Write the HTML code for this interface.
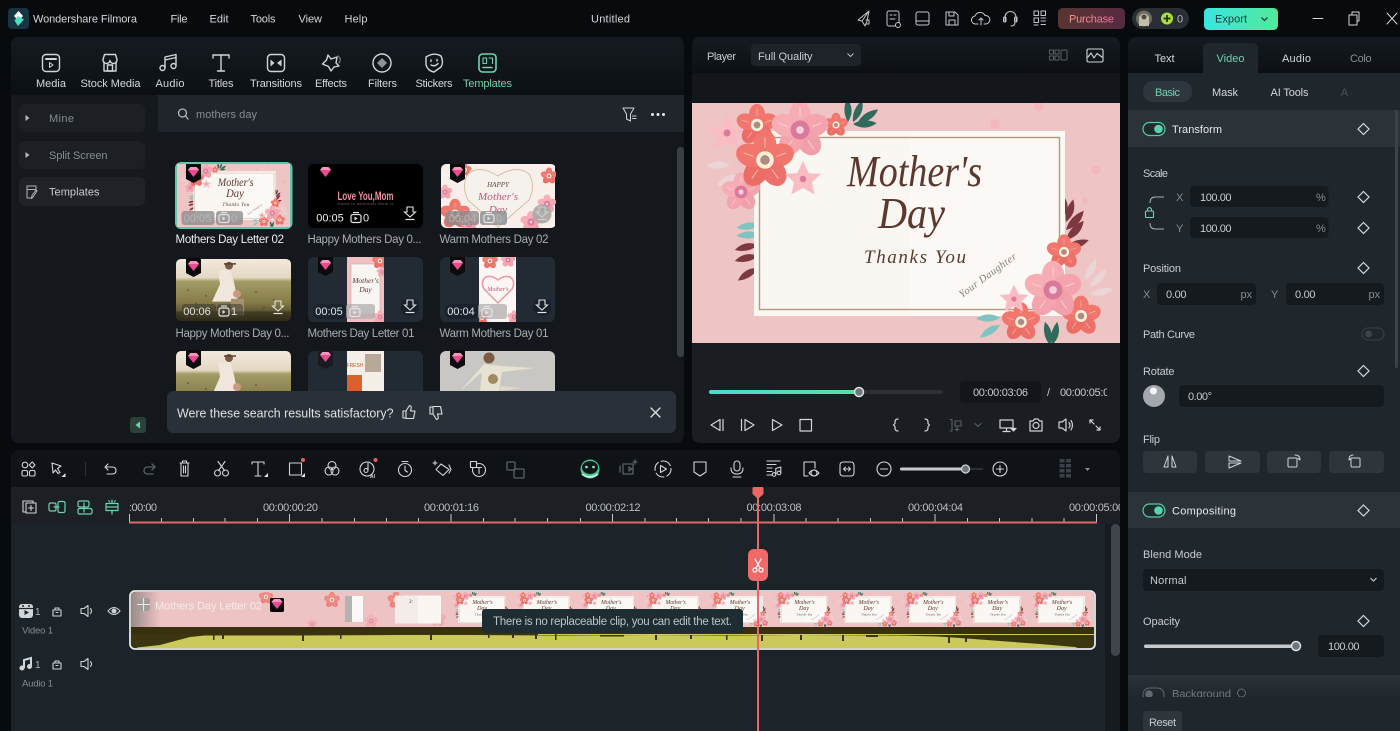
<!DOCTYPE html>
<html lang="en"><head><meta charset="utf-8"><title>Wondershare Filmora</title>
<style>
html,body{margin:0;padding:0;background:#080b0e;width:1400px;height:731px;overflow:hidden}
svg{display:block}
text{font-family:"Liberation Sans",sans-serif;font-size:11px;fill:#d4d7da}
.c{text-anchor:middle}
.d{fill:#868c92}
.l{fill:#c8ccd0}
.i{fill:none;stroke:#d2d5d8;stroke-width:1.3;stroke-linecap:round;stroke-linejoin:round}
.t{fill:none;stroke:#6fd3b0;stroke-width:1.4;stroke-linecap:round;stroke-linejoin:round}
.m{fill:none;stroke:#5b6066;stroke-width:1.3;stroke-linecap:round;stroke-linejoin:round}
.s{font-family:"Liberation Serif",serif;font-style:italic;fill:#5c382e}
</style></head><body>
<svg width="1400" height="731" viewBox="0 0 1400 731" xmlns="http://www.w3.org/2000/svg">
<defs>
<linearGradient id="gb" x1="0" y1="0" x2="0" y2="1"><stop offset="0" stop-color="#161b21"/><stop offset="1" stop-color="#0c1014"/></linearGradient>
<linearGradient id="gp" x1="0" y1="0" x2="1" y2="0"><stop offset="0" stop-color="#5a3531"/><stop offset="1" stop-color="#562a42"/></linearGradient>
<linearGradient id="gptx" x1="0" y1="0" x2="1" y2="0"><stop offset="0" stop-color="#f49a8a"/><stop offset="1" stop-color="#ee6aa0"/></linearGradient>
<linearGradient id="ge" x1="0" y1="0" x2="1" y2="0"><stop offset="0" stop-color="#3ae6e0"/><stop offset="1" stop-color="#52e89a"/></linearGradient>
<linearGradient id="gs" x1="0" y1="0" x2="1" y2="0"><stop offset="0" stop-color="#4fd6d4"/><stop offset="1" stop-color="#58e0a0"/></linearGradient>
<linearGradient id="gr" x1="0" y1="0" x2="0" y2="1"><stop offset="0" stop-color="#2b3238"/><stop offset="1" stop-color="#1f262c"/></linearGradient>
<linearGradient id="gf" x1="0" y1="0" x2="0" y2="1"><stop offset="0" stop-color="#f1e9dd"/><stop offset=".3" stop-color="#e4d8c4"/><stop offset=".36" stop-color="#a39c66"/><stop offset=".7" stop-color="#857b48"/><stop offset="1" stop-color="#332e18"/></linearGradient>
<linearGradient id="gl" x1="0" y1="0" x2="1" y2="0"><stop offset="0" stop-color="#9a8a8a"/><stop offset=".03" stop-color="#edc3c3"/></linearGradient>

<g id="fc">
 <ellipse cx="0" cy="-17" rx="13" ry="17" fill="#f0766e"/><ellipse cx="0" cy="-17" rx="13" ry="17" fill="#f0766e" transform="rotate(72)"/><ellipse cx="0" cy="-17" rx="13" ry="17" fill="#ee706a" transform="rotate(144)"/><ellipse cx="0" cy="-17" rx="13" ry="17" fill="#ec6c66" transform="rotate(216)"/><ellipse cx="0" cy="-17" rx="13" ry="17" fill="#f0766e" transform="rotate(288)"/>
 <g stroke="#fbc4b8" stroke-width="1" fill="none"><path d="M0-14V-26M13-4L24-8M8 11L15 21M-8 11L-15 21M-13-4L-24-8"/></g>
 <circle r="10" fill="#fdf0d8"/><circle r="5.500" fill="#7a4a48" opacity=".6"/>
</g>
<g id="fp">
 <ellipse cx="0" cy="-17" rx="13" ry="17" fill="#f6adb3"/><ellipse cx="0" cy="-17" rx="13" ry="17" fill="#f3a4ad" transform="rotate(72)"/><ellipse cx="0" cy="-17" rx="13" ry="17" fill="#f0a0aa" transform="rotate(144)"/><ellipse cx="0" cy="-17" rx="13" ry="17" fill="#f3a4ad" transform="rotate(216)"/><ellipse cx="0" cy="-17" rx="13" ry="17" fill="#f6adb3" transform="rotate(288)"/>
 <g stroke="#fbd4d8" stroke-width="1" fill="none"><path d="M0-15V-27M14-4L25-8M9 12L16 22M-9 12L-16 22M-14-4L-25-8"/></g>
 <circle r="11" fill="#d97a9b"/><circle r="4.500" fill="#f6cfdc"/>
</g>
<g id="fs">
 <path d="M0-28L9-9 28-8 14 5 18 24 0 14-18 24-14 5-28-8-9-9Z" fill="#f8bcc2"/><circle r="5" fill="#dc7a98"/>
</g>
<g id="leaf"><path d="M0 0Q8-10 22-9Q14 3 0 0Z"/></g>

<g id="mc">
 <rect x="692" y="103" width="428" height="240" fill="#efc4c5"/>
 <g fill="#f6b4b8" opacity=".7"><circle cx="1039" cy="106" r="5"/><circle cx="995" cy="124" r="5"/><circle cx="1096" cy="170" r="5"/><circle cx="1085" cy="201" r="3"/></g>
 <g fill="#2f6a5c"><use href="#leaf" transform="translate(848,122) rotate(-70)"/><use href="#leaf" transform="translate(853,122) rotate(-45)"/><use href="#leaf" transform="translate(858,122) rotate(-10)"/><use href="#leaf" transform="translate(853,124) rotate(20)"/></g>
 <g fill="#7fc4c0"><use href="#leaf" transform="translate(760,225) rotate(195)"/><use href="#leaf" transform="translate(760,235) rotate(200)"/></g>
 <g fill="#7c3a40"><use href="#leaf" transform="translate(758,245) rotate(190)"/><use href="#leaf" transform="translate(758,256) rotate(190)"/><use href="#leaf" transform="translate(758,268) rotate(170)"/></g>
 <g fill="#7c3a40"><use href="#leaf" transform="translate(1066,240) rotate(-25) scale(1.1)"/><use href="#leaf" transform="translate(1066,230) rotate(-25) scale(1.1)"/><use href="#leaf" transform="translate(1066,247) rotate(5)"/><use href="#leaf" transform="translate(1066,222) rotate(-50)"/><use href="#leaf" transform="translate(1066,215) rotate(-80) scale(.9)"/></g>
 <g fill="#ead6d6"><use href="#leaf" transform="translate(730,165) rotate(200)"/><use href="#leaf" transform="translate(738,175) rotate(175)"/><use href="#leaf" transform="translate(1085,280) rotate(-40)"/><use href="#leaf" transform="translate(1090,287) rotate(-25)"/><use href="#leaf" transform="translate(1090,294) rotate(10)"/></g>
 <rect x="754" y="131" width="311" height="185" fill="#faf6f2"/>
 <rect x="910" y="131" width="155" height="185" fill="#fbf8f5"/>
 <rect x="759.500" y="137.500" width="300" height="172" fill="none" stroke="#b59a7c" stroke-width="1.400"/>
 <text class="s" x="847" y="186" style="font-size:44px" textLength="135" lengthAdjust="spacingAndGlyphs">Mother's</text>
 <text class="s" x="878" y="228" style="font-size:44px" textLength="67" lengthAdjust="spacingAndGlyphs">Day</text>
 <text class="s" x="864" y="263" style="font-size:19px" textLength="102" >Thanks You</text>
 <text class="s" transform="translate(962,298) rotate(-36)" style="font-size:10.500px;fill:#8a7a72" textLength="68">Your Daughter</text>
 <use href="#fs" transform="translate(727,133) scale(.7)"/>
 <use href="#fc" transform="translate(757,125) scale(.62)"/>
 <use href="#fc" transform="translate(836,125) scale(.36)"/>
 <use href="#fp" transform="translate(800,130) scale(.86)"/>
 <use href="#fp" transform="translate(741,192) scale(.58)"/>
 <use href="#fc" transform="translate(765,160) scale(.88)"/>
 <use href="#fs" transform="translate(803,179) scale(.64)"/>
 <g fill="#2f6a5c"><use href="#leaf" transform="translate(1050,345) rotate(-80)"/><use href="#leaf" transform="translate(1052,345) rotate(-55)"/></g>
 <g fill="#7fc4c0"><use href="#leaf" transform="translate(1000,318) rotate(200)"/><use href="#leaf" transform="translate(1000,325) rotate(170)"/></g>
 <use href="#fc" transform="translate(1021,322) scale(.58)"/>
 <use href="#fc" transform="translate(1081,316) scale(.6)"/>
 <use href="#fc" transform="translate(1064,252) scale(.52)"/>
 <use href="#fp" transform="translate(1053,290) scale(.86)"/>
 <use href="#fs" transform="translate(1014,299) scale(.52)"/>
</g>

<g id="gem"><path d="M-5.500-3L-3-6H3L5.500-3 0 4Z" fill="#ee4a94"/><path d="M-5.500-3L-3-6H3L5.500-3Z" fill="#fb95c0"/></g>
<g id="badge"><path d="M0 0H15V15L7.500 19 0 15Z" fill="#0b0b0d"/><use href="#gem" x="7.500" y="9"/></g>
<g id="badge0"><use href="#gem" x="7.500" y="9"/></g>
<path id="kf" d="M0-5.500L5.500 0 0 5.500-5.500 0Z" fill="none" stroke="#d6d9dc" stroke-width="1.200"/>
<g id="dl"><path d="M-3-6H3V-1H5.500L0 4-5.500-1H-3Z" fill="none" stroke="#e2e4e6" stroke-width="1.100"/><path d="M-4.500 6.500H4.500" stroke="#e2e4e6" stroke-width="1.200"/></g>
<g id="clipi"><rect x="-5" y="-3.500" width="10" height="8" rx="2" fill="none" stroke="#e2e4e6" stroke-width="1.200"/><path d="M-3-5.500H3" stroke="#e2e4e6" stroke-width="1.100"/><path d="M-1.500-1.500L1.500.5-1.500 2.500Z" fill="#e2e4e6"/></g>

<g id="photo">
 <rect width="115" height="64" fill="url(#gf)"/>
 <g fill="#7a2e20" opacity=".6"><circle cx="12" cy="32" r="1"/><circle cx="30" cy="38" r="1"/><circle cx="80" cy="34" r="1"/><circle cx="98" cy="42" r="1"/><circle cx="20" cy="46" r="1"/><circle cx="88" cy="50" r="1"/></g>
 <path d="M42 12L54 10 58 24 62 44H36L44 26Z" fill="#f0e6dc"/>
 <circle cx="53" cy="7" r="4" fill="#7a5a46"/><path d="M48 5H60" stroke="#5a4030" stroke-width="1.600"/>
 <circle cx="61" cy="36" r="4" fill="#c89a84"/><path d="M55 41H68V58H55Z" fill="#a88f70"/>
 <rect y="54" width="115" height="10" fill="#2a2614" opacity=".5"/>
</g>
<g id="film">
 <rect width="64.400" height="35" fill="#eec4c5"/>
 <use href="#mc" transform="scale(.1505,.1458) translate(-692,-103)"/>
</g>
<clipPath id="cpanel"><rect x="11" y="37" width="673" height="406" rx="8"/></clipPath>
<clipPath id="cgrid"><rect x="158" y="132" width="519" height="259"/></clipPath>
<clipPath id="cclip"><rect x="131" y="592" width="963" height="56" rx="4"/></clipPath>
<clipPath id="ctl"><rect x="11" y="487" width="1109" height="244"/></clipPath>
<clipPath id="ctc"><rect x="1050" y="380" width="57" height="24"/></clipPath>
<clipPath id="ccol"><rect x="1340" y="45" width="32" height="24"/></clipPath>
<clipPath id="cbg"><rect x="1128" y="675" width="272" height="22"/></clipPath>
<clipPath id="r1"><rect x="0" y="0" width="115" height="64" rx="5"/></clipPath>
<clipPath id="pa"><rect x="347" y="257" width="37" height="65"/></clipPath>
<clipPath id="pb"><rect x="479" y="257" width="37" height="65"/></clipPath>
<clipPath id="pc"><rect x="440" y="351" width="115" height="40"/></clipPath>
</defs>

<rect width="1400" height="731" fill="#080b0e"/>

<!-- TITLE BAR -->
<rect x="8" y="8" width="21" height="21" rx="4" fill="#163540"/>
<path d="M18.500 11L23 16 18.500 21 14 16Z" fill="#ffffff"/><path d="M18 16L24 19.500 18 26 14.500 20.500Z" fill="#52dcc0"/>
<text x="33" y="22.500" textLength="104">Wondershare Filmora</text>
<text x="170.500" y="22.500" textLength="17">File</text>
<text x="209.500" y="22.500" textLength="19">Edit</text>
<text x="250.500" y="22.500" textLength="25">Tools</text>
<text x="298.500" y="22.500" textLength="23.500">View</text>
<text x="344.500" y="22.500" textLength="23">Help</text>
<text x="591" y="22.500" textLength="39">Untitled</text>

<g class="i" style="stroke-width:1;stroke:#c2c6c9">
 <path d="M869 11L858 20 862 21 865 26 867 21Z"/><path d="M862 21L869 11"/><path d="M866 20H869V24H866"/>
 <rect x="887" y="11" width="12" height="15" rx="2"/><path d="M890 15H892M894 15H896M890 19H895"/><circle cx="898" cy="25" r="2.500" fill="#080b0e"/>
 <rect x="916" y="12" width="13" height="13" rx="2"/><path d="M916 21H929"/>
 <path d="M946 12H955L958 15V25H946Z"/><path d="M949 12V16H954V12M949 25V20H955V25"/>
 <path d="M978 24H976A4 4 0 0 1 975 16 5.500 5.500 0 0 1 985 15.500 4 4 0 0 1 986 24H984"/><path d="M981 25V18M979 20L981 18 983 20"/>
 <path d="M1005 21V17A5.500 5.500 0 0 1 1016 17V21"/><rect x="1003.500" y="17" width="2.500" height="5" rx="1"/><rect x="1014.500" y="17" width="2.500" height="5" rx="1"/><path d="M1015 22Q1015 26 1011 26"/>
 <rect x="1034" y="11" width="4.500" height="4.500"/><rect x="1041" y="11" width="4.500" height="4.500"/><rect x="1034" y="18" width="4.500" height="4.500"/><path d="M1041 18H1045.500M1041 21H1045.500M1041 24.500H1045.500M1034 25H1038"/>
</g>
<rect x="1058" y="8" width="67" height="21" rx="4.500" fill="url(#gp)"/>
<text x="1091.500" y="22.500" class="c" style="fill:url(#gptx)" textLength="45">Purchase</text>
<rect x="1132" y="8" width="57" height="21" rx="10.500" fill="#292e34"/>
<circle cx="1144" cy="18.500" r="8" fill="#6a6a60"/><path d="M1139 26V17Q1144 10 1149 17V26Z" fill="#c5bda8"/><circle cx="1144" cy="17" r="2.500" fill="#4a4a40"/>
<circle cx="1167" cy="18.500" r="6" fill="#a9df36"/><path d="M1167 15V22M1163.500 18.500H1170.500" stroke="#23320c" stroke-width="1.800"/>
<text x="1180" y="22.500" class="d c" style="fill:#b2b6ba">0</text>
<rect x="1204" y="8" width="74" height="22" rx="4.500" fill="url(#ge)"/>
<text x="1215" y="22.500" textLength="32" style="fill:#0e3a36">Export</text>
<path d="M1261.500 17.500L1264.500 20.500 1267.500 17.500" fill="none" stroke="#0e3a36" stroke-width="1.200"/>
<g class="i" style="stroke-width:1"><path d="M1313 18.500H1323"/><rect x="1349" y="15" width="8" height="10"/><path d="M1352 15V12H1359V21H1357"/><path d="M1387 13L1397 24M1397 13L1387 24"/></g>

<!-- MEDIA PANEL -->
<g clip-path="url(#cpanel)">
 <rect x="11" y="37" width="673" height="406" fill="#14171c"/>
 <rect x="11" y="37" width="673" height="58" fill="url(#gb)"/>
 <rect x="11" y="95" width="147" height="348" fill="#15181d"/>
 <rect x="158" y="95" width="526" height="37" fill="#1f252b"/>
</g>
<g class="i" style="stroke-width:1.400">
 <rect x="42.500" y="54.500" width="17" height="17" rx="3.500"/><path d="M46 59H56" stroke-width="2"/><path d="M49.500 62.500L53 65 49.500 67.500Z" stroke-width="1"/>
 <path d="M103 59.500L104.500 54.500H115.500L117 59.500A3.300 3.300 0 0 1 110 60.500 3.300 3.300 0 0 1 103 59.500Z"/><path d="M104 62V71H116V62"/><rect x="107.500" y="65" width="5" height="6"/>
 <path d="M165 67.500V57L176 54.500V65"/><circle cx="162.500" cy="68" r="2.500"/><circle cx="173.500" cy="66" r="2.500"/><path d="M165 60L176 57.500"/>
 <path d="M213 58V55H229V58M221 55V71M217.500 71H224.500"/>
 <rect x="267.500" y="54.500" width="17" height="17" rx="3.500"/>
 <path d="M270.500 59.500L274.500 63 270.500 66.500Z" style="stroke:none;fill:#d2d5d8"/><path d="M281.500 59.500L277 63 281.500 66.500Z" style="stroke:none;fill:#d2d5d8"/>
 <path d="M328 55L331 59 337 57 336 63 339 66 334 67 331 71 328.500 66.500 322.500 64 326.500 60Z"/><path d="M338 56Q342 59 339 63" stroke="#6a6f75"/>
 <circle cx="382" cy="63" r="9"/><path d="M382 58L387 63 382 68 377 63Z" style="stroke:none;fill:#8e9399"/>
 <path d="M426 57Q434 52 441 56Q444 62 441 67L434 72Q428 71 426 65Z"/><path d="M431 60V61.500M437 59.500V61M431 65Q435 67 438 63.500"/>
</g>
<g class="t" style="stroke-width:1.600"><rect x="479" y="54" width="17" height="18" rx="3.500"/><path d="M483 67.500H492"/><path d="M483 58V63.500H486.500V58ZM489 58H492.500V63.500" style="stroke-width:1.100"/></g>
<text x="51" y="87" class="c" textLength="30">Media</text>
<text x="110.500" y="87" class="c" textLength="60">Stock Media</text>
<text x="170" y="87" class="c" textLength="29">Audio</text>
<text x="221" y="87" class="c" textLength="25">Titles</text>
<text x="276" y="87" class="c" textLength="52">Transitions</text>
<text x="331" y="87" class="c" textLength="32">Effects</text>
<text x="382.500" y="87" class="c" textLength="29">Filters</text>
<text x="434" y="87" class="c" textLength="37">Stickers</text>
<text x="487.500" y="87" class="c" textLength="49" style="fill:#6fd0ae">Templates</text>

<!-- sidebar -->
<rect x="19" y="104" width="126" height="28" rx="6" fill="#1c2025"/>
<rect x="19" y="141" width="126" height="28" rx="6" fill="#1c2025"/>
<rect x="19" y="177" width="126" height="29" rx="6" fill="#1f2328"/>
<path d="M25.500 115L29.500 118 25.500 121Z M25.500 152L29.500 155 25.500 158Z" fill="#b5b9bd"/>
<text x="49" y="122" class="d" textLength="25">Mine</text>
<text x="49" y="159" class="d" textLength="58.500">Split Screen</text>
<text x="49" y="195.500" class="l" textLength="50.500">Templates</text>
<g class="i" style="stroke:#b0b4b8;stroke-width:1"><path d="M36 191V186H27V198H31"/><path d="M27 189.500H36"/><path d="M37 191L33 197 31.500 198.500 32 195.500 36 190Z"/></g>
<rect x="130" y="417" width="16" height="16" rx="3" fill="#2c4238"/><path d="M140 421.500L135.500 425 140 428.500Z" fill="#6fd3b0"/>

<!-- search -->
<g class="i" style="stroke:#b6babe"><circle cx="182.500" cy="113" r="4"/><path d="M185.500 116L188 119"/></g>
<text x="196" y="118" class="d" textLength="61">mothers day</text>
<g class="i" style="stroke:#d0d3d6;stroke-width:1"><path d="M623 108H634L630.500 114V121L626.500 119V114Z"/><path d="M632.500 116H636M632.500 118.500H636"/></g>
<circle cx="652.500" cy="114.500" r="1.500" fill="#e6e8ea"/><circle cx="658" cy="114.500" r="1.500" fill="#e6e8ea"/><circle cx="663.500" cy="114.500" r="1.500" fill="#e6e8ea"/>
<rect x="677" y="147" width="7" height="210" rx="3.500" fill="#3a3f45"/>

<!-- GRID -->
<g clip-path="url(#cgrid)">
 <!-- row 1 -->
 <rect x="175" y="162" width="117.500" height="67" rx="6" fill="#5fc8ac"/>
 <svg x="177" y="164" width="113" height="63" viewBox="692 103 428 240" preserveAspectRatio="none"><use href="#mc"/></svg>
 <rect x="181.500" y="211" width="33" height="14" rx="3" fill="#8a8a8c" opacity=".78"/><rect x="216" y="211" width="27" height="14" rx="3" fill="#8a8a8c" opacity=".78"/>
 <text x="197.500" y="222" class="c" style="fill:#b8b4b4">00:05</text><use href="#clipi" x="224" y="218"/><text x="231" y="222" style="fill:#b8b4b4">0</text>
 <use href="#badge" x="186" y="164"/>

 <rect x="308" y="164" width="115" height="64" rx="6" fill="#000"/>
 <text x="365.500" y="200" class="c" style="font-size:11.500px;font-weight:bold;fill:#ee8ea0" textLength="56" lengthAdjust="spacingAndGlyphs">Love You,Mom</text>
 <text x="365.500" y="205" class="c" style="font-size:4px;fill:#7d5d66" textLength="56">Home is wherever Mom is</text>
 <use href="#badge0" x="318" y="164"/>
 <text x="330" y="221.500" class="c" style="fill:#eceef0">00:05</text><use href="#clipi" x="356" y="218"/><text x="363" y="221.500" style="fill:#eceef0">0</text>
 <use href="#dl" x="410" y="213"/>

 <g transform="translate(441,164)">
  <g clip-path="url(#r1)">
  <rect width="114" height="64" fill="#f8eeea"/>
  <use href="#fc" transform="translate(14,50) scale(.45)"/><use href="#fp" transform="translate(28,60) scale(.3)"/><use href="#fp" transform="translate(4,28) scale(.22)"/>
  <use href="#fc" transform="translate(108,12) scale(.25)"/><use href="#fp" transform="translate(106,40) scale(.28)"/><use href="#fc" transform="translate(24,6) scale(.2)"/><use href="#fp" transform="translate(90,58) scale(.32)"/>
  <path d="M57 63L27 36Q20 22 27 10 38 0 57 12 76 0 88 10 95 22 88 36Z" fill="#f5f1ec" stroke="#d6c19f" stroke-width="1"/>
  <text x="57" y="23" class="c s" style="font-size:7px;fill:#5a4238">HAPPY</text>
  <text x="57" y="36" class="c s" style="font-size:11px;fill:#c8567e" textLength="40">Mother's</text>
  <text x="57" y="49" class="c s" style="font-size:11px;fill:#c8567e">Day</text>
  </g>
 </g>
 <rect x="446" y="211" width="33" height="14" rx="3" fill="#8a8a8c" opacity=".78"/><rect x="480" y="211" width="27" height="14" rx="3" fill="#8a8a8c" opacity=".78"/>
 <text x="462.500" y="222" class="c" style="fill:#b8b4b4">00:04</text><use href="#clipi" x="489" y="218"/><text x="496" y="222" style="fill:#b8b4b4">0</text>
 <circle cx="542" cy="214" r="9.500" fill="#a9a7a5" opacity=".9"/><use href="#dl" x="542" y="213" opacity=".6"/>
 <use href="#badge" x="450" y="164"/>

 <!-- row 2 -->
 <g transform="translate(176,259) scale(1,.97)"><use href="#photo" clip-path="url(#r1)"/></g>
 <rect x="182" y="304" width="34" height="14" rx="3" fill="#3a3a30" opacity=".55"/><rect x="217" y="304" width="26" height="14" rx="3" fill="#3a3a30" opacity=".55"/>
 <text x="197" y="315" class="c" style="fill:#e2e2de">00:06</text><use href="#clipi" x="224" y="311.500"/><text x="231" y="315" style="fill:#e2e2de">1</text>
 <use href="#dl" x="278" y="307"/>
 <use href="#badge" x="186" y="258"/>

 <rect x="308" y="257" width="115" height="65" rx="6" fill="#222b34"/>
 <g clip-path="url(#pa)">
 <rect x="347" y="257" width="37" height="65" fill="#f2bfc4"/><rect x="351" y="264" width="29" height="50" fill="#f9f5f2" stroke="#bba48c" stroke-width=".5"/>
 <text x="365.500" y="283" class="c s" style="font-size:7.500px">Mother's</text><text x="365.500" y="292" class="c s" style="font-size:7.500px">Day</text>
 <use href="#fc" transform="translate(380,261) scale(.24)"/><use href="#fp" transform="translate(382,272) scale(.16)"/><use href="#fp" transform="translate(380,317) scale(.2)"/>
 </g>
 <rect x="313" y="304" width="33" height="15" rx="6" fill="#1a232c"/><rect x="346" y="304" width="29" height="15" rx="3" fill="#b0acac" opacity=".72"/>
 <text x="329" y="315" class="c" style="fill:#e2e4e6">00:05</text><use href="#clipi" x="355" y="312"/><text x="362" y="315" style="fill:#bdbaba">0</text>
 <circle cx="410" cy="307" r="9" fill="#182028"/><use href="#dl" x="410" y="306"/>
 <use href="#badge" x="318" y="257"/>

 <rect x="440" y="257" width="115" height="65" rx="6" fill="#222b34"/>
 <g clip-path="url(#pb)">
 <rect x="479" y="257" width="37" height="65" fill="#fbf5f3"/>
 <path d="M498 303L484 289Q480 281 486 277 492 275 498 280 504 275 510 277 516 281 512 289Z" fill="none" stroke="#ea9aa0" stroke-width="1.500"/>
 <text x="498" y="291" class="c s" style="font-size:6px;fill:#c8567e">Mother's</text>
 <use href="#fc" transform="translate(490,261) scale(.24)"/><use href="#fp" transform="translate(508,260) scale(.22)"/><use href="#fp" transform="translate(514,317) scale(.2)"/><use href="#fc" transform="translate(482,318) scale(.2)"/>
 </g>
 <rect x="445" y="304" width="33" height="15" rx="6" fill="#1a232c"/><rect x="478" y="304" width="29" height="15" rx="3" fill="#b0acac" opacity=".72"/>
 <text x="461" y="315" class="c" style="fill:#e2e4e6">00:04</text><use href="#clipi" x="487" y="312"/><text x="494" y="315" style="fill:#bdbaba">0</text>
 <circle cx="542" cy="307" r="9" fill="#182028"/><use href="#dl" x="542" y="306"/>
 <use href="#badge" x="450" y="257"/>

 <!-- labels -->
 <text x="175.500" y="243" style="font-size:11.500px;fill:#eceef0" textLength="108.500">Mothers Day Letter 02</text>
 <text x="307.500" y="243" class="l" style="font-size:11.500px;fill:#a8adb2" textLength="114">Happy Mothers Day 0...</text>
 <text x="439.500" y="243" class="l" style="font-size:11.500px;fill:#a8adb2" textLength="109">Warm Mothers Day 02</text>
 <text x="175.500" y="337" style="font-size:11.500px;fill:#a8adb2" textLength="114">Happy Mothers Day 0...</text>
 <text x="307.500" y="337" style="font-size:11.500px;fill:#a8adb2" textLength="107">Mothers Day Letter 01</text>
 <text x="439.500" y="337" style="font-size:11.500px;fill:#a8adb2" textLength="109">Warm Mothers Day 01</text>

 <!-- row 3 -->
 <g transform="translate(176,351)"><use href="#photo" clip-path="url(#r1)"/></g>
 <use href="#badge" x="186" y="350"/>
 <rect x="308" y="351" width="115" height="64" rx="6" fill="#222b34"/>
 <rect x="347" y="351" width="37" height="60" fill="#f4f0e8"/><rect x="347" y="375" width="15" height="20" fill="#d8622a"/><rect x="365" y="354" width="16" height="18" fill="#b8a89a"/>
 <text x="355" y="367" class="c" style="font-size:5px;fill:#c85a2a">FRESH</text>
 <path d="M318 350H333V365L325.500 369 318 365Z" fill="#1a1a20"/><use href="#gem" x="325.500" y="358"/>
 <g clip-path="url(#pc)">
 <rect x="440" y="351" width="115" height="64" rx="6" fill="#c9c7c3"/>
 <circle cx="489" cy="358" r="5.500" fill="#7a5a42"/><path d="M484 364L500 366 535 368 502 372 499 391H480L482 372 460 391Z" fill="#e8e2d2"/>
 <circle cx="493" cy="379" r="5" fill="#a08a60"/><path d="M500 386L522 388 500 391Z" fill="#e0d8c4"/>
 </g>
 <use href="#badge" x="450" y="350"/>
</g>

<!-- feedback -->
<rect x="167" y="391" width="509" height="42" rx="6" fill="#2a3037"/>
<text x="177" y="417.500" style="font-size:13.200px;fill:#dee1e3" textLength="216.500" lengthAdjust="spacingAndGlyphs">Were these search results satisfactory?</text>
<g class="i" style="stroke:#dfe2e4;stroke-width:1.100">
 <path d="M406 411V418H403V411ZM406 411L409.500 405.500Q412 406 411 409L410.500 411H415L413.500 418.500H406"/>
 <path d="M433 414V407H430V414ZM433 414L436.500 419.500Q439 419 438 416L437.500 414H442L440.500 406.500H433"/>
 <path d="M651 408L660 417M660 408L651 417" style="stroke-width:1.300"/>
</g>

<!-- PLAYER -->
<rect x="692" y="37" width="428" height="406" rx="8" fill="#1a1d21"/>
<path d="M692 73V45A8 8 0 0 1 700 37H1112A8 8 0 0 1 1120 45V73Z" fill="url(#gb)"/>
<rect x="692" y="73" width="428" height="30" fill="#13171b"/>
<text x="707" y="60" class="l" textLength="29">Player</text>
<rect x="751" y="44" width="110" height="22" rx="4" fill="#1d2329"/>
<text x="758" y="60" class="l" textLength="54.500">Full Quality</text>
<path d="M847.500 53.500L850.500 56.500 853.500 53.500" fill="none" stroke="#b8bcc0" stroke-width="1.100"/>
<g class="m" style="stroke-width:1"><rect x="1049.500" y="50" width="4" height="4"/><rect x="1055" y="50" width="4" height="4"/><rect x="1049.500" y="56" width="4" height="4"/><rect x="1055" y="56" width="4" height="4"/><rect x="1061" y="50" width="6" height="10" rx="1"/></g>
<g class="i" style="stroke-width:1.100"><rect x="1087" y="49" width="16" height="13" rx="1.500"/><path d="M1088 57L1091 53 1094 58 1097 53.500 1102 57"/></g>

<svg x="692" y="103" width="428" height="240" viewBox="692 103 428 240"><use href="#mc"/></svg>

<!-- transport -->
<rect x="709" y="390" width="234" height="4" rx="2" fill="#2c3036"/>
<rect x="709" y="390" width="150" height="4" rx="2" fill="url(#gs)"/>
<circle cx="859" cy="392" r="4.500" fill="#71767c" stroke="#dfe1e3" stroke-width="1.500"/>
<rect x="960" y="381" width="81" height="22" rx="4" fill="#121519"/>
<text x="1000.500" y="396" class="c l" textLength="55">00:00:03:06</text>
<text x="1047" y="396" class="l">/</text>
<g clip-path="url(#ctc)"><text x="1060" y="396" class="l" textLength="55">00:00:05:00</text></g>
<g class="i" style="stroke-width:1.200">
 <path d="M720 419.500L711 425 720 430.500ZM723 419.500V430.500"/>
 <path d="M741.500 419.500V430.500M745 419.500L754 425 745 430.500Z"/>
 <path d="M772.500 419.500L782 425 772.500 430.500Z"/>
 <rect x="800" y="419.500" width="11.500" height="11.500"/>
 <path d="M898 419Q895 419 895 422V423.500L893.500 425 895 426.500V428Q895 431 898 431"/>
 <path d="M925 419Q928 419 928 422V423.500L929.500 425 928 426.500V428Q928 431 925 431"/>
 <path d="M1000 420H1013V428H1000ZM1006.500 428V431.500M1003 431.500H1010"/><path d="M1011 428.500H1016L1013.500 431Z" style="fill:#d2d5d8"/>
 <path d="M1030 421H1033L1034.500 419H1038L1039.500 421H1042V431H1030Z"/><circle cx="1036" cy="425.500" r="3"/>
 <path d="M1059 422H1062L1066 419V431L1062 428H1059ZM1069 422.500Q1071 425 1069 428M1071 420.500Q1074 425 1071 430"/>
 <path d="M1090 420L1094 424M1090 420V423M1090 420H1093M1100 430L1096 426M1100 430V427M1100 430H1097"/>
</g>
<g class="m" style="stroke-width:1.100"><path d="M950 419.500H952V431H950M955 421H961V426H955ZM957 427V431M955 429.500H959"/><path d="M975 423.500L978 426.500 981 423.500"/></g>

<!-- RIGHT PANEL -->
<path d="M1128 45A8 8 0 0 1 1136 37H1400V73H1128Z" fill="url(#gb)"/>
<rect x="1128" y="73" width="272" height="658" fill="#1f262c"/>
<path d="M1203 73V49Q1203 43 1209 43H1252Q1258 43 1258 49V73Z" fill="#1f262c"/>
<text x="1164.500" y="62" class="c" textLength="20">Text</text>
<text x="1230.500" y="62" class="c" style="fill:#6fd0ae" textLength="28">Video</text>
<text x="1296.500" y="62" class="c" textLength="29">Audio</text>
<g clip-path="url(#ccol)"><text x="1350" y="62" class="d" textLength="25">Color</text></g>
<rect x="1143" y="81" width="49" height="21" rx="10" fill="#2f373e"/>
<text x="1167.500" y="96" class="c" style="fill:#6fd0ae" textLength="25">Basic</text>
<text x="1225" y="96" class="c" textLength="26">Mask</text>
<text x="1289.500" y="96" class="c" textLength="38">AI Tools</text>
<text x="1344.500" y="96" class="c" style="fill:#4c5258">A</text>

<rect x="1128" y="110" width="272" height="37" fill="#2b3238"/>
<rect x="1395" y="110" width="3" height="258" rx="1.500" fill="#3c4249"/>
<rect x="1143" y="122.500" width="22" height="13" rx="6.500" fill="#1f2c2c" stroke="#58c8a8" stroke-width="1.200"/><circle cx="1158.500" cy="129" r="4.300" fill="#52d6ae"/>
<text x="1172" y="133" style="fill:#e8eaec" textLength="50">Transform</text>
<use href="#kf" x="1363.500" y="129"/>

<text x="1143" y="177" class="l" textLength="25">Scale</text>
<text x="1176" y="201" class="d">X</text><text x="1176" y="232" class="d">Y</text>
<rect x="1190" y="186" width="138.500" height="21" rx="4" fill="#151a1f"/><rect x="1190" y="217" width="138.500" height="21" rx="4" fill="#151a1f"/>
<text x="1200" y="201" class="l" textLength="31.500">100.00</text><text x="1200" y="232" class="l" textLength="31.500">100.00</text>
<text x="1316" y="201" class="d">%</text><text x="1316" y="232" class="d">%</text>
<use href="#kf" x="1363.500" y="197"/><use href="#kf" x="1363.500" y="228"/>
<path d="M1164 197H1155Q1150 197 1150 203M1150 223Q1150 229 1155 229H1164" fill="none" stroke="#aab0b4" stroke-width="1"/>
<g class="t" style="stroke-width:1.100"><rect x="1145.500" y="211" width="8" height="6.500" rx="1"/><path d="M1147.500 211V209Q1149.500 206 1151.500 209V211"/></g>

<text x="1143" y="272" class="l" textLength="38">Position</text>
<use href="#kf" x="1363.500" y="268"/>
<text x="1143" y="298" class="d">X</text>
<rect x="1157" y="283" width="99" height="22" rx="4" fill="#151a1f"/>
<text x="1166" y="298" class="l" textLength="20.500">0.00</text><text x="1240.500" y="298" class="d">px</text>
<text x="1271" y="298" class="d">Y</text>
<rect x="1286" y="283" width="98" height="22" rx="4" fill="#151a1f"/>
<text x="1295" y="298" class="l" textLength="20.500">0.00</text><text x="1368.500" y="298" class="d">px</text>

<text x="1143" y="338" class="l" textLength="52">Path Curve</text>
<rect x="1362" y="328" width="22" height="12" rx="6" fill="#1f262c" stroke="#3a4047"/><circle cx="1368.500" cy="334" r="3.500" fill="#3e444b"/>

<text x="1143" y="375" class="l" textLength="31.500">Rotate</text>
<use href="#kf" x="1363.500" y="371"/>
<circle cx="1154" cy="396" r="11" fill="#a4a8ad"/><circle cx="1153.500" cy="391" r="3.500" fill="#f4f5f6"/>
<rect x="1179" y="385" width="205" height="22" rx="4" fill="#151a1f"/>
<text x="1188" y="400" class="l" textLength="24">0.00°</text>

<text x="1143" y="443" class="l" textLength="17">Flip</text>
<rect x="1143" y="451" width="54" height="22" rx="4" fill="#2e353b"/><rect x="1205" y="451" width="55" height="22" rx="4" fill="#2e353b"/><rect x="1267" y="451" width="54" height="22" rx="4" fill="#2e353b"/><rect x="1329" y="451" width="55" height="22" rx="4" fill="#2e353b"/>
<g class="i" style="stroke-width:1"><path d="M1168 456L1164 467H1168ZM1172 456L1176 467H1172Z"/><path d="M1229 456L1241 461H1229ZM1229 463H1241L1229 468Z"/>
<rect x="1288" y="458" width="9" height="9" rx="1"/><path d="M1295 455Q1300 455 1300 460M1300 460L1298 458.500"/>
<rect x="1351" y="458" width="9" height="9" rx="1"/><path d="M1353 455Q1349 455 1349 460M1349 460L1351 458.500"/></g>

<rect x="1128" y="492" width="272" height="36" fill="#2b3238"/>
<rect x="1143" y="504" width="22" height="13" rx="6.500" fill="#1f2c2c" stroke="#58c8a8" stroke-width="1.200"/><circle cx="1158.500" cy="510.500" r="4.300" fill="#52d6ae"/>
<text x="1172" y="514.500" style="fill:#e8eaec" textLength="64">Compositing</text>
<use href="#kf" x="1363.500" y="510.500"/>

<text x="1143" y="558" class="l" textLength="59">Blend Mode</text>
<rect x="1143" y="569" width="241" height="22" rx="4" fill="#151a1f"/>
<text x="1150" y="584" class="l" textLength="36.500">Normal</text>
<path d="M1370.500 578L1373.500 581 1376.500 578" fill="none" stroke="#c0c4c8" stroke-width="1.200"/>
<text x="1143" y="625" class="l" textLength="37">Opacity</text>
<use href="#kf" x="1363.500" y="621"/>
<rect x="1144" y="644.500" width="152" height="3.500" rx="1.700" fill="#c8cbce"/>
<circle cx="1296" cy="646" r="4.500" fill="#71767c" stroke="#dfe1e3" stroke-width="1.500"/>
<rect x="1318" y="635" width="66" height="22" rx="4" fill="#151a1f"/>
<text x="1328" y="650" class="l" textLength="31.500">100.00</text>

<rect x="1128" y="675" width="272" height="22" fill="url(#gr)"/>
<g clip-path="url(#cbg)">
 <rect x="1143" y="688" width="21" height="13" rx="6.500" fill="none" stroke="#62686e"/><circle cx="1149" cy="694" r="3.800" fill="#62686e"/>
 <text x="1172" y="697.500" style="fill:#747a80" textLength="59">Background</text>
 <circle cx="1241.500" cy="693" r="4" fill="none" stroke="#626870"/>
</g>
<rect x="1143" y="711" width="39" height="22" rx="4" fill="#2e353b"/>
<text x="1162.500" y="726" class="c l" textLength="27">Reset</text>

<!-- TIMELINE -->
<path d="M11 731V458A8 8 0 0 1 19 450H1112A8 8 0 0 1 1120 458V731Z" fill="#1c2126"/>
<path d="M11 487V458A8 8 0 0 1 19 450H1112A8 8 0 0 1 1120 458V487Z" fill="#0f1317"/>
<rect x="11" y="487" width="1109" height="37" fill="#1c1f23"/>
<rect x="11" y="524" width="1094" height="207" fill="#1d2429"/>
<rect x="1105" y="524" width="15" height="207" fill="#171b1f"/>
<rect x="1111" y="524" width="9" height="132" rx="4.500" fill="#3f454c"/>

<!-- timeline toolbar icons -->
<g class="i" style="stroke-width:1.100">
 <circle cx="25" cy="465" r="2.800"/><rect x="22" y="470.500" width="5.500" height="5.500" rx="1.500"/><rect x="29.500" y="470.500" width="5.500" height="5.500" rx="1.500"/><path d="M32.200 461.800L35 465 32.200 468 29.400 465Z"/>
 <path d="M52 463L61 466 57.500 468.500 60 472.500 58 473.500 55.500 470 53 473Z"/>
 <path d="M105 467H112Q116 467 116 470.500T112 474H107M105 467L108 464M105 467L108 470"/>
 <path d="M180 463H189M182.500 463V461H186.500V463M181 463V476H188V463M183.500 466V473M185.500 466V473"/>
 <circle cx="217.500" cy="473" r="3"/><circle cx="225.500" cy="473" r="3"/><path d="M218.500 470.500L225 461.500M224.500 470.500L218 461.500"/>
 <path d="M252 464V462H264V464M258 462V476M255 476H261"/>
 <rect x="289.500" y="463" width="12" height="12"/>
 <circle cx="332" cy="465.500" r="4"/><circle cx="329" cy="471" r="4"/><circle cx="335" cy="471" r="4"/>
 <circle cx="367" cy="469" r="7"/><circle cx="366" cy="470.500" r="2"/><path d="M368 470V463"/>
 <circle cx="405" cy="470" r="6.500"/><path d="M402 461.500H408M405 466V470.500L407.500 472"/>
 <path d="M441 464L449 469.500 443 475.500 436 469.500Z"/><path d="M433 463H437M435 461V465M449 465L451 469.500 449 473"/>
 <circle cx="479" cy="470" r="6.500"/><path d="M476.500 467.500H481.500M479 467.500V473.500"/><rect x="470.500" y="461.500" width="6" height="6" style="fill:#0f1317"/>
 <path d="M663 461A8 8 0 0 1 663 477A8 8 0 0 1 663 461" stroke-dasharray="9 3"/><path d="M660.500 465.500L666.500 469 660.500 472.500Z"/>
 <path d="M694 462H706V472L700 476 694 472Z"/>
 <rect x="734" y="461" width="6" height="10" rx="3"/><path d="M731 468Q731 474 737 474T743 468M733 477H741"/>
 <path d="M767 461H780M767 464.500H776M767 468H772M767 471.500H772M767 475H772"/><circle cx="774" cy="474.500" r="1.800"/><circle cx="779" cy="473" r="1.800"/><path d="M775.800 474V468.500L780.800 467V472.500"/>
 <path d="M808 462H804V476H808M804 462H815V468"/><circle cx="814" cy="473" r="3"/><path d="M809 473Q814 467 819 473 814 479 809 473Z" style="stroke-width:1"/>
 <rect x="840" y="462" width="14" height="14" rx="3"/><path d="M843.500 469H850.500M843.500 469L845.500 467M843.500 469L845.500 471M850.500 469L848.500 467M850.500 469L848.500 471" style="stroke-width:1"/>
 <circle cx="884" cy="469" r="7"/><path d="M880.500 469H887.500"/>
 <circle cx="1000" cy="469" r="7"/><path d="M996.500 469H1003.500M1000 465.500V472.500"/>
</g>
<rect x="85" y="462" width="1" height="14" fill="#2c3036"/>
<g class="m"><path d="M155 467H148Q144 467 144 470.500T148 474H153"/><path d="M155 467L152 464M155 467L152 470"/>
 <rect x="507" y="462" width="8" height="8" rx="1"/><rect x="514" y="469" width="10" height="9" rx="1"/>
 <path d="M623 464H633V474H623ZM620 466V472M629 467L632 469 629 471Z"/><path d="M635 460V464M633 462H637"/></g>
<path d="M65.500 473V477H61.500Z M268 473V477H264Z M305 473V477H301Z" fill="#e0e2e4"/>
<circle cx="303" cy="460" r="2" fill="#e8605e"/><circle cx="375.500" cy="460" r="2" fill="#e8605e"/>
<text x="370" y="478" style="font-size:5px;font-weight:bold;fill:#d2d5d8">AI</text>
<!-- robot -->
<circle cx="590" cy="469" r="9.500" fill="#48c794"/><ellipse cx="590" cy="467.500" rx="8" ry="6.500" fill="#10181a"/><path d="M582 474Q590 480 598 474" fill="none" stroke="#bff3d8" stroke-width="2"/>
<circle cx="586.500" cy="467" r="1.300" fill="#a4e8c8"/><circle cx="593.500" cy="467" r="1.300" fill="#a4e8c8"/>
<rect x="900" y="467.500" width="65" height="3" rx="1.500" fill="#c8cbce"/><rect x="965" y="468" width="18" height="2" fill="#2c3036"/>
<circle cx="965.500" cy="469" r="4" fill="#71767c" stroke="#cfd2d5" stroke-width="1.300"/>
<g fill="#3c4147"><rect x="1059.500" y="459" width="5" height="3.500"/><rect x="1066" y="459" width="5" height="3.500"/><rect x="1059.500" y="464" width="5" height="3.500"/><rect x="1066" y="464" width="5" height="3.500"/><rect x="1059.500" y="469" width="5" height="3.500"/><rect x="1066" y="469" width="5" height="3.500"/><rect x="1059.500" y="474" width="5" height="3.500"/><rect x="1066" y="474" width="5" height="3.500"/></g>
<path d="M1085 468H1090L1087.500 471Z" fill="#8a8f95"/>

<!-- timeline left icons -->
<g class="i" style="stroke-width:1.100"><path d="M26 512H23V501H33V503"/><rect x="26" y="503" width="10" height="10"/><path d="M31 505.500V510.500M28.500 508H33.500"/></g>
<g class="t" style="stroke-width:1.200">
 <rect x="49" y="503" width="7" height="8" rx="1.500"/><rect x="58" y="501.500" width="7" height="11" rx="1.500"/><path d="M54 507H59"/>
 <rect x="78" y="501" width="11" height="6" rx="1.500"/><rect x="78" y="508.500" width="14" height="5.500" rx="1.500"/><path d="M84 503V512"/>
 <path d="M112 500V503M112 511V514M106 503.500H118V510.500H106ZM106 507H118"/><path d="M108.500 500.500L110 502M115.500 500.500L114 502" style="stroke-width:.9"/>
</g>

<!-- ruler -->
<text x="129" y="511" style="fill:#bcc0c4" textLength="28">:00:00</text>
<text x="290.500" y="511" class="c" style="fill:#bcc0c4" textLength="55">00:00:00:20</text>
<text x="451.500" y="511" class="c" style="fill:#bcc0c4" textLength="55">00:00:01:16</text>
<text x="613" y="511" class="c" style="fill:#bcc0c4" textLength="55">00:00:02:12</text>
<text x="774" y="511" class="c" style="fill:#bcc0c4" textLength="55">00:00:03:08</text>
<text x="935.500" y="511" class="c" style="fill:#bcc0c4" textLength="55">00:00:04:04</text>
<g clip-path="url(#ctl)"><text x="1069" y="511" style="fill:#bcc0c4" textLength="55">00:00:05:00</text></g>
<g stroke="#c6c9cc" stroke-width="1" fill="none">
 <path d="M129.500 514V522M161.500 518V522M193.500 518V522M225 518V522M257.500 518V522M289.500 514V522M322 518V522M354.500 518V522M386.500 518V522M418.500 518V522M451 514V522M483.500 518V522M515 518V522M547.500 518V522M580.500 518V522M612.500 514V522M645 518V522M676.500 518V522M708.500 518V522M741 518V522M774 514V522M806 518V522M838 518V522M870.500 518V522M902.500 518V522M935 514V522M967.500 518V522M999.500 518V522M1032 518V522M1064 518V522M1096.500 514V522"/>
</g>
<rect x="129" y="521.500" width="968" height="2" fill="#e3686a"/>

<!-- tracks -->
<g class="i" style="stroke:#cdd1d4;stroke-width:1.100">
 <path d="M53 610H61V616H53ZM55 610V608H59V610"/><path d="M56 612.500H58"/>
 <path d="M81 608.500H84L88 605.500V616.500L84 613.500H81ZM90.500 608.500Q92.500 611 90.500 613.500"/>
 <path d="M108 611Q114 604 120 611 114 618 108 611Z"/><circle cx="114" cy="611" r="2" style="fill:#cdd1d4"/>
 <path d="M53 663H61V669H53ZM55 663V661H59V663"/><path d="M56 665.500H58"/>
 <path d="M81 661.500H84L88 658.500V669.500L84 666.500H81ZM90.500 661.500Q92.500 664 90.500 666.500"/>
</g>
<rect x="19" y="604" width="14" height="14" rx="3" fill="#d2d5d8"/><path d="M19 608.500H33" stroke="#1d2429" stroke-width="1.200"/><path d="M24.500 610L29 612.500 24.500 615Z" fill="#1d2429"/>
<circle cx="23" cy="606" r="1" fill="#1d2429"/><circle cx="29" cy="606" r="1" fill="#1d2429"/>
<text x="35" y="615" class="d" style="font-size:10px;fill:#b0b4b8">1</text>
<text x="22" y="633.500" class="d" style="font-size:9.500px" textLength="31">Video 1</text>
<path d="M24 668V660L31 658V666" fill="none" stroke="#d2d5d8" stroke-width="2"/><circle cx="22" cy="668" r="2.500" fill="#d2d5d8"/><circle cx="29.500" cy="666.500" r="2.500" fill="#d2d5d8"/>
<text x="35" y="668" class="d" style="font-size:10px;fill:#b0b4b8">1</text>
<text x="22" y="686.500" class="d" style="font-size:9.500px" textLength="31">Audio 1</text>

<!-- clip -->
<rect x="130" y="591" width="965" height="58" rx="5" fill="#2c2a14" stroke="#e8eaea" stroke-width="1.800"/>
<g clip-path="url(#cclip)">
 <rect x="131" y="592" width="963" height="35" fill="url(#gl)"/>
 <g opacity=".75">
 <use href="#fc" transform="translate(266,597) scale(.22)"/><use href="#fc" transform="translate(332,600) scale(.24)"/><use href="#fp" transform="translate(312,624) scale(.16)"/><use href="#fp" transform="translate(371,621) scale(.2)"/>
 <use href="#fc" transform="translate(396,600) scale(.26)"/><use href="#fp" transform="translate(438,619) scale(.24)"/>
 </g>
 <rect x="345" y="596" width="18" height="26" fill="#fbf8f5"/><rect x="345" y="596" width="7" height="26" fill="#b4b2b2"/>
 <rect x="395" y="595.500" width="46" height="28" fill="#faf6f2"/><rect x="395" y="595.500" width="23" height="28" fill="#f3ece8"/><text x="409" y="603" class="s" style="font-size:5px">3:</text>
 <use href="#film" x="449" y="592"/><use href="#film" x="513.400" y="592"/><use href="#film" x="577.800" y="592"/><use href="#film" x="642.200" y="592"/><use href="#film" x="706.600" y="592"/><use href="#film" x="771" y="592"/><use href="#film" x="835.400" y="592"/><use href="#film" x="899.800" y="592"/><use href="#film" x="964.200" y="592"/><use href="#film" x="1028.600" y="592"/>
 <rect x="131" y="627" width="963" height="7" fill="#39300f"/>
 <rect x="131" y="634" width="963" height="15" fill="#3a3610"/>
 <rect x="538" y="634" width="556" height="1" fill="#cbc95a"/>
 <path d="M137 647.500L160 645 175 641 190 637 205 635.500 240 635.500 300 635.500 400 635 470 635 560 635.500 650 635 720 635.500 800 635 900 635.500 938 636.500 960 638 1000 641 1040 644 1075 647 1078 648H137Z" fill="#cbc95a"/>
 <g fill="#3a3610"><rect x="213" y="635" width="1.500" height="5"/><rect x="222" y="635" width="2" height="4"/><rect x="302" y="635" width="2" height="6"/><rect x="340" y="635" width="1.500" height="4"/><rect x="430" y="634" width="2" height="6"/><rect x="488" y="634" width="1.500" height="4"/><rect x="512" y="634" width="2" height="4"/><rect x="535" y="634" width="2" height="5"/><rect x="555" y="634" width="1.500" height="6"/><rect x="600" y="635" width="24" height="1.500"/><rect x="655" y="635" width="2" height="5"/><rect x="690" y="635" width="2" height="4"/><rect x="726" y="635" width="1.500" height="5"/><rect x="761" y="635" width="2" height="6"/><rect x="800" y="635" width="2" height="5"/><rect x="842" y="635" width="2" height="6"/><rect x="866" y="635" width="12" height="2"/><rect x="948" y="635" width="2" height="8"/><rect x="965" y="635" width="2" height="7"/></g>
</g>
<!-- tooltip -->
<rect x="482" y="609" width="261" height="24" rx="3" fill="#1e2d31"/>
<text x="612.500" y="625" class="c" style="font-size:11.500px;fill:#bcc4c6" textLength="239">There is no replaceable clip, you can edit the text.</text>
<!-- clip title -->
<rect x="137" y="598" width="13" height="13" rx="3" fill="#a09c9a"/><path d="M143.500 598V611M137 604.500H150" stroke="#f0e4e0" stroke-width="1.100"/>
<text x="155" y="609.500" style="fill:#f5ebe9;font-size:11px" textLength="107">Mothers Day Letter 02</text>
<rect x="270" y="598" width="14" height="14" rx="1.500" fill="#0a0a0c"/><use href="#gem" x="277" y="605"/>

<!-- playhead -->
<rect x="757" y="497" width="2" height="234" fill="#ef6464"/>
<path d="M752.500 488Q752.500 487 754 487H762Q763.500 487 763.500 488V494L758 499 752.500 494Z" fill="#ef6464"/>
<rect x="748" y="549" width="20" height="32" rx="6" fill="#ef6a68"/>
<g class="i" style="stroke:#fff;stroke-width:1.200"><circle cx="755" cy="570" r="2"/><circle cx="761" cy="570" r="2"/><path d="M756 568L761 559M760 568L755 559"/></g>
</svg>
</body></html>
